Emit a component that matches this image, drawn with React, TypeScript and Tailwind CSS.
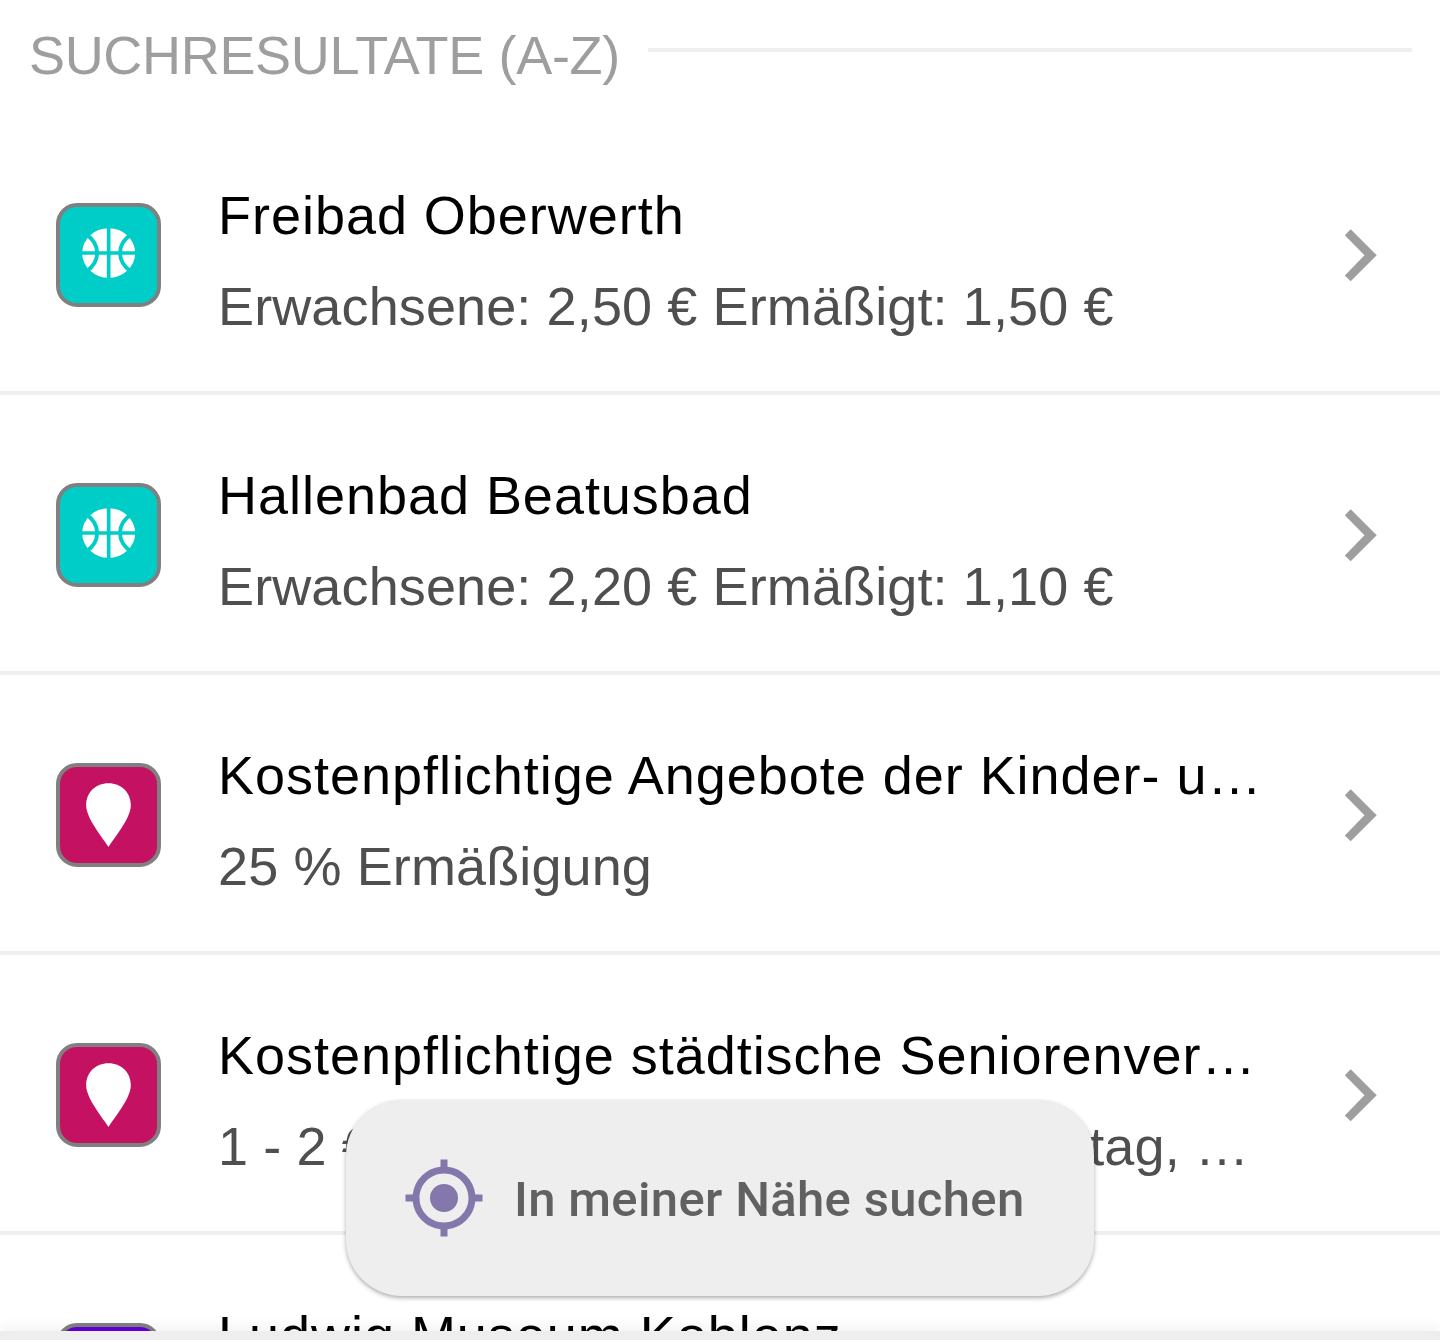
import React from "react";

type Kind = "sport" | "pin" | "museum";

const tileColors: Record<Kind, string> = {
  sport: "bg-[#00cdc8]",
  pin: "bg-[#c51162]",
  museum: "bg-[#6200d9]",
};

function Tile({ kind }: { kind: Kind }) {
  return (
    <div className={`h-[104px] w-[105px] shrink-0 overflow-hidden rounded-[21px] border-4 border-[#808080] ${tileColors[kind]}`}>
      {kind === "sport" && (
        <svg viewBox="60 51 291 288" className="h-full w-full">
          <ellipse cx="206" cy="189" rx="79.5" ry="74.5" fill="#fff" />
          <g fill="none" stroke="#00cdc8" strokeWidth="11.5">
            <path d="M206 109V269" strokeWidth="11" />
            <path d="M120 189H292" strokeWidth="11" />
            <path d="M140 134Q171.500 157 171.500 189T140 244" />
            <path d="M272 134Q240 157 240 189T272 244" />
          </g>
        </svg>
      )}
      {kind === "pin" && (
        <svg viewBox="60 51 291 288" className="h-full w-full">
          <path d="M205.500 291C177 249 138.500 202 138.500 166C138.500 126 168 100 205.500 100S272.500 126 272.500 166C272.500 202 234 249 205.500 291Z" fill="#fff" />
        </svg>
      )}
    </div>
  );
}

interface RowProps {
  kind: Kind;
  title: string;
  children?: React.ReactNode;
}

function Row({ kind, title, children }: RowProps) {
  return (
    <div className="flex h-[280px] shrink-0 items-start border-b-4 border-[#eeeeee] pl-14">
      <div className="pt-[88px]">
        <Tile kind={kind} />
      </div>
      <div className="ml-[57px] w-[1060px] shrink-0 whitespace-nowrap pt-[55px] text-[54px] leading-[91px]">
        <div className="tracking-[0.97px] text-black">{title}</div>
        <div className="tracking-[0.12px] text-[#4f4f4f]">{children}</div>
      </div>
      <svg viewBox="0 0 33 53" className="ml-[66px] mt-[114px] h-[53px] w-[33px] shrink-0">
        <path d="M6.700 .3L.8 6.300L20.500 26.300L.8 46.500L6.700 52.300L32.700 26.300Z" fill="#9e9e9e" />
      </svg>
    </div>
  );
}

export default function App() {
  return (
    <div className="relative flex h-[1340px] w-[1440px] flex-col overflow-hidden bg-white font-['Liberation_Sans',sans-serif]">
      <div className="flex min-h-0 flex-1 flex-col overflow-hidden">
        <header className="flex h-[115px] shrink-0 items-start px-[28px]">
          <h1 className="w-[620px] shrink-0 whitespace-nowrap pl-px pt-[19px] text-[54px] leading-[72px] tracking-[-0.32px] text-[#9e9e9e]">
            SUCHRESULTATE (A-Z)
          </h1>
          <div className="mt-[48px] h-1 flex-1 bg-[#eeeeee]" />
        </header>
        <Row kind="sport" title="Freibad Oberwerth">
          Erwachsene: 2,50 € Ermäßigt: 1,50 €
        </Row>
        <Row kind="sport" title="Hallenbad Beatusbad">
          Erwachsene: 2,20 € Ermäßigt: 1,10 €
        </Row>
        <Row kind="pin" title="Kostenpflichtige Angebote der Kinder- u…">
          25 % Ermäßigung
        </Row>
        <Row kind="pin" title="Kostenpflichtige städtische Seniorenver…">
          <div className="flex w-[1031px] justify-between">
            <span>1 - 2 €</span>
            <span>tag, …</span>
          </div>
        </Row>
        <Row kind="museum" title="Ludwig Museum Koblenz" />
      </div>
      <footer className="h-[9px] shrink-0 bg-[#eeeeee] shadow-[0_-3px_14px_rgba(0,0,0,0.07)]" />
      <button className="absolute left-[346px] top-[1100px] flex h-[196px] w-[748px] items-center rounded-[56px] bg-[#eeeeee] pl-[56px] shadow-[0_2px_4px_rgba(0,0,0,0.32)]">
        <svg viewBox="0 0 24 24" className="h-[84px] w-[84px] shrink-0" fill="#8477ab">
          <path d="M12 8a4 4 0 1 0 0 8 4 4 0 0 0 0-8zm8.940 3A8.994 8.994 0 0 0 13 3.060V1h-2v2.060A8.994 8.994 0 0 0 3.060 11H1v2h2.060A8.994 8.994 0 0 0 11 20.940V23h2v-2.060A8.994 8.994 0 0 0 20.940 13H23v-2h-2.060zM12 19c-3.870 0-7-3.130-7-7s3.130-7 7-7 7 3.130 7 7-3.130 7-7 7z" />
        </svg>
        <span className="ml-[28px] whitespace-nowrap pt-[3px] font-['Roboto',sans-serif] text-[49px] font-medium leading-[60px] tracking-[0.34px] text-[#616161]">
          In meiner Nähe suchen
        </span>
      </button>
    </div>
  );
}
